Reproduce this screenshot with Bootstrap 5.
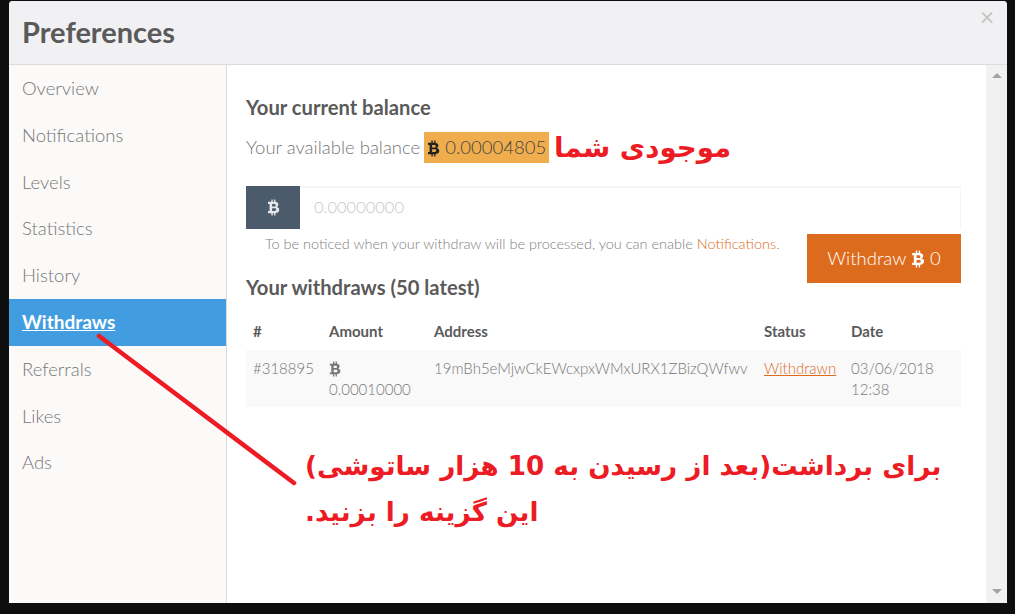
<!DOCTYPE html>
<html lang="en">
<head>
    <meta charset="UTF-8">
    <meta name="viewport" content="width=device-width, initial-scale=1.0">
    <title>Preferences</title>
    <link href="https://cdn.jsdelivr.net/npm/bootstrap@5.3.3/dist/css/bootstrap.min.css" rel="stylesheet">
    <style>
        html, body {
            height: 100%;
            overflow: hidden;
        }
        body {
            background-color: #0e0e0e;
            font-family: "Lato", "Liberation Sans", sans-serif;
            font-weight: 300;
            font-size: 18.5px;
            color: #555;
            padding: 1px 8px 11px 9px;
        }
        .prefs-box {
            position: relative;
            height: 602px;
            background-color: #fff;
            border-radius: 4px 4px 0 0;
            overflow: hidden;
        }
        .prefs-head {
            height: 63px;
            background-color: #f1f1f3;
            border-bottom: 1px solid #dcdcdc;
            padding-left: 13px;
            box-sizing: content-box;
        }
        .prefs-title {
            font-size: 29px;
            font-weight: 700;
            color: #5a5a5a;
            margin: 0;
        }
        .prefs-close {
            position: absolute;
            top: 0;
            right: 8px;
            width: 24px;
            border: 0;
            padding: 0;
            background: none;
            font-size: 25px;
            line-height: 31px;
            font-weight: 400;
            color: #c4c4c4;
        }
        .side-menu {
            width: 218px;
            background-color: #fbfaf9;
            border-right: 1px solid #dcdcdc;
        }
        .side-link {
            display: block;
            height: 46.8px;
            line-height: 46px;
            padding-left: 13px;
            color: #777;
            text-decoration: none;
        }
        .side-link.is-on {
            background-color: #429de0;
            color: #fff;
            font-size: 19px;
            font-weight: 700;
            text-decoration: underline;
        }
        .main-pane {
            width: 760px;
            padding: 29px 25px 0 19px;
        }
        .pane-heading {
            font-size: 20.2px;
            font-weight: 700;
            color: #5a5a5a;
            margin: 0;
            line-height: 26px;
        }
        .balance-line {
            height: 31px;
            margin-top: 12px;
            line-height: 31px;
            color: #777;
        }
        .balance-tag {
            display: inline-block;
            background-color: #f0ad4e;
            color: #444;
            width: 125px;
            text-align: center;
            margin-left: 4px;
        }
        .balance-tag .btc-mark {
            color: #222;
        }
        .btc-mark {
            width: 13px;
            height: 17px;
            vertical-align: -3px;
            fill: currentColor;
        }
        .amount-group {
            margin-top: 23px;
            height: 43px;
        }
        .amount-addon {
            width: 55px;
            background-color: #4b5b6b;
            color: #e8e8e8;
            border: 0;
            border-radius: 0;
            justify-content: center;
            padding: 0;
        }
        .amount-input {
            border: 0;
            border-top: 2px solid #f5f5f5;
            border-right: 1px solid #f5f5f5;
            border-radius: 0;
            padding: 0 0 3px 14px;
            font-size: 16.5px;
            font-weight: 300;
            font-family: inherit;
        }
        .amount-input::placeholder {
            color: #c8c8c8;
        }
        .help-row {
            height: 49px;
            margin-top: 5px;
        }
        .help-text {
            font-size: 14.5px;
            padding: 0 0 0 19px;
            color: #808080;
            line-height: 20px;
        }
        .orange-link {
            color: #dd6b1d;
            text-decoration: none;
        }
        .withdraw-btn {
            width: 154px;
            height: 49px;
            background-color: #dd6b1d;
            color: #fff;
            border: 0;
            border-radius: 0;
            font-size: 18.5px;
            font-weight: 300;
            padding: 0;
        }
        .withdraw-btn .btc-mark {
            width: 14px;
            height: 18px;
        }
        .withdraws-heading {
            margin-top: -9px;
        }
        .withdraw-table {
            margin: 15px 0 0;
            font-size: 15px;
            table-layout: fixed;
        }
        .withdraw-table th {
            font-weight: 700;
            color: #5a5a5a;
            border: 0;
            padding: 6px 7px 8px;
            line-height: 21px;
            font-size: 15px;
        }
        .withdraw-table td {
            background-color: #f9f9f9;
            color: #777;
            font-weight: 300;
            border: 0;
            padding: 8px 7px 7px;
            line-height: 21px;
            box-shadow: none;
        }
        .withdraw-table .btc-mark {
            width: 12px;
            height: 16px;
        }
        .fake-scroll {
            width: 21px;
            background-color: #f1f1f1;
            padding: 8px 0 9px;
        }
        .arrow-up, .arrow-down {
            width: 0;
            height: 0;
            border-left: 5px solid transparent;
            border-right: 5px solid transparent;
        }
        .arrow-up {
            border-bottom: 5px solid #a3a3a3;
        }
        .arrow-down {
            border-top: 5px solid #a3a3a3;
        }
        .note-layer {
            position: absolute;
            left: 0;
            top: 0;
            width: 100%;
            height: 100%;
            pointer-events: none;
        }
        .note-text {
            position: absolute;
            color: #ed1c24;
            font-family: "DejaVu Sans", sans-serif;
            font-weight: 700;
            white-space: nowrap;
        }
        .note-balance {
            left: 545px;
            top: 129px;
            font-size: 27.7px;
            line-height: 36px;
        }
        .note-how {
            left: 296px;
            font-size: 26.2px;
            line-height: 40px;
        }
        .note-how-1 {
            top: 445px;
        }
        .note-how-2 {
            top: 491px;
        }
    </style>
</head>
<body>
    <svg width="0" height="0" class="d-none">
        <symbol id="btc" viewBox="0 0 12 16">
            <path fill-rule="evenodd" d="M4 0.5H5.3V2.6H6.6V0.5H7.9V2.7C9.8 3 10.7 4.1 10.6 5.4C10.5 6.4 10 7.1 9.2 7.5C10.6 7.9 11.5 8.8 11.4 10.3C11.3 12 10 13 7.9 13.2V15.5H6.6V13.3H5.3V15.5H4V13.3H0.8V11.4H2.3V4.6H0.8V2.7H4ZM4.7 4.7V7.1H6.9C8.5 7.1 8.5 4.7 6.9 4.7ZM4.7 8.8V11.3H7.2C9 11.3 9 8.8 7.2 8.8Z"/>
        </symbol>
    </svg>

    <div class="prefs-box d-flex flex-column">
        <div class="prefs-head d-flex align-items-center">
            <h4 class="prefs-title">Preferences</h4>
        </div>
        <button type="button" class="prefs-close">&times;</button>

        <div class="d-flex flex-grow-1">
            <nav class="side-menu flex-shrink-0">
                <a class="side-link" href="#">Overview</a>
                <a class="side-link" href="#">Notifications</a>
                <a class="side-link" href="#">Levels</a>
                <a class="side-link" href="#">Statistics</a>
                <a class="side-link" href="#">History</a>
                <a class="side-link is-on" href="#">Withdraws</a>
                <a class="side-link" href="#">Referrals</a>
                <a class="side-link" href="#">Likes</a>
                <a class="side-link" href="#">Ads</a>
            </nav>

            <div class="main-pane flex-grow-1">
                <h5 class="pane-heading">Your current balance</h5>
                <div class="balance-line">
                    Your available balance<span class="balance-tag"><svg class="btc-mark"><use href="#btc"/></svg> 0.00004805</span>
                </div>

                <div class="input-group amount-group">
                    <span class="input-group-text amount-addon"><svg class="btc-mark"><use href="#btc"/></svg></span>
                    <input type="text" class="form-control amount-input" placeholder="0.00000000">
                </div>

                <div class="help-row d-flex justify-content-between">
                    <p class="help-text mb-0">To be noticed when your withdraw will be processed, you can enable <a class="orange-link" href="#">Notifications</a>.</p>
                    <button type="button" class="btn withdraw-btn flex-shrink-0">Withdraw <svg class="btc-mark"><use href="#btc"/></svg> 0</button>
                </div>

                <h5 class="pane-heading withdraws-heading">Your withdraws (50 latest)</h5>

                <table class="table withdraw-table">
                    <colgroup>
                        <col width="76">
                        <col width="105">
                        <col width="330">
                        <col width="87">
                        <col width="117">
                    </colgroup>
                    <thead>
                        <tr>
                            <th>#</th>
                            <th>Amount</th>
                            <th>Address</th>
                            <th>Status</th>
                            <th>Date</th>
                        </tr>
                    </thead>
                    <tbody>
                        <tr>
                            <td>#318895</td>
                            <td><svg class="btc-mark"><use href="#btc"/></svg><br>0.00010000</td>
                            <td>19mBh5eMjwCkEWcxpxWMxURX1ZBizQWfwv</td>
                            <td><a class="orange-link text-decoration-underline" href="#">Withdrawn</a></td>
                            <td>03/06/2018 12:38</td>
                        </tr>
                    </tbody>
                </table>
            </div>

            <div class="fake-scroll flex-shrink-0 d-flex flex-column justify-content-between align-items-center">
                <div class="arrow-up"></div>
                <div class="arrow-down"></div>
            </div>
        </div>

        <div class="note-layer">
            <svg width="998" height="602" class="position-absolute top-0 start-0">
                <line x1="90" y1="335" x2="285" y2="482" stroke="#ed1c24" stroke-width="4.5" stroke-linecap="round"/>
            </svg>
            <div class="note-text note-balance" dir="rtl">موجودی شما</div>
            <div class="note-text note-how note-how-1" dir="rtl">برای برداشت(بعد از رسیدن به 10 هزار ساتوشی)</div>
            <div class="note-text note-how note-how-2" dir="rtl">این گزینه را بزنید.</div>
        </div>
    </div>

    <script src="https://cdn.jsdelivr.net/npm/bootstrap@5.3.3/dist/js/bootstrap.bundle.min.js"></script>
</body>
</html>
